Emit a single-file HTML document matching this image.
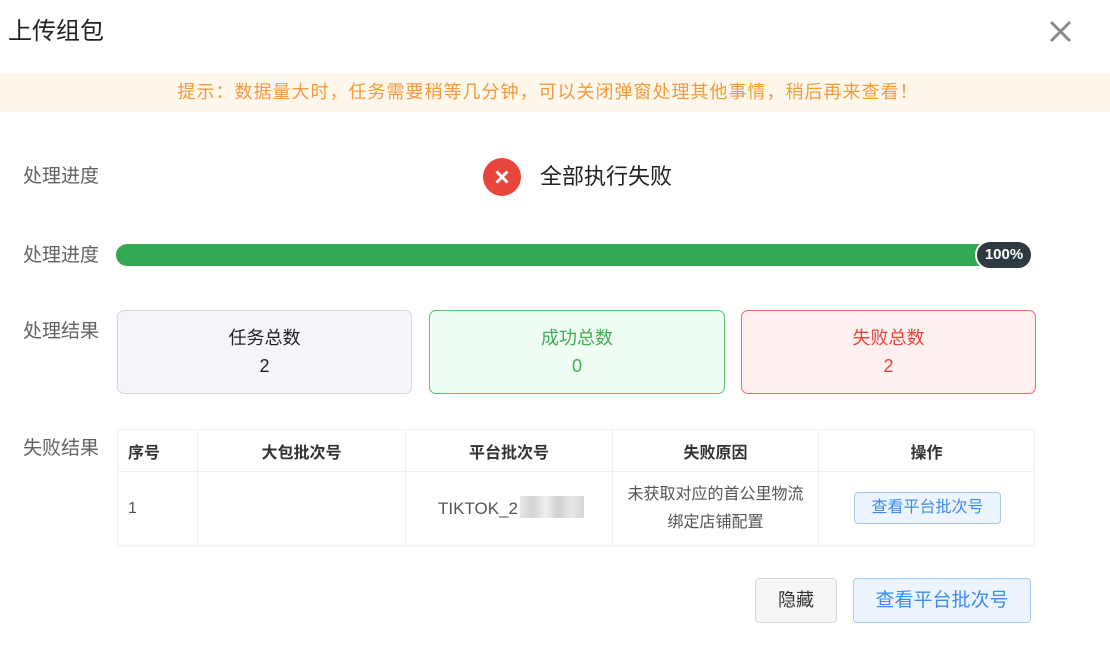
<!DOCTYPE html>
<html><head><meta charset="utf-8"><style>
*{margin:0;padding:0;box-sizing:border-box}
body{width:1110px;height:645px;background:#fff;position:relative;overflow:hidden;font-family:"Liberation Sans","Noto Sans CJK SC",sans-serif;color:#333}
.a{position:absolute}
.lbl{position:absolute;left:23px;font-size:19px;color:#606266;line-height:22px}
.card{position:absolute;top:310px;height:84px;border-radius:7px;border:1px solid;text-align:center;font-size:18px}
.card .t{position:absolute;top:13px;width:100%}
.card .n{position:absolute;top:45px;width:100%}
table{position:absolute;left:117px;top:429px;width:918px;border-collapse:collapse;font-size:16px}
td,th{border:1px solid #ebeef5;text-align:center;color:#555}
th{height:42px;font-weight:bold;color:#333}
td{height:74px}
.btn{position:absolute;border-radius:4px;border:1px solid;text-align:center}
</style></head><body>
<div class="a" style="left:8px;top:17px;font-size:24px;color:#222;line-height:30px">上传组包</div>
<svg class="a" style="left:1048px;top:19px" width="25" height="25" viewBox="0 0 25 25"><path d="M3 3L22 22M22 3L3 22" stroke="#8a8a8a" stroke-width="3"/></svg>
<div class="a" style="left:0;top:73px;width:1110px;height:39px;background:#fff6ec;color:#f39a3b;font-size:18px;letter-spacing:1px;line-height:39px;text-align:center;padding-right:14px">提示：数据量大时，任务需要稍等几分钟，可以关闭弹窗处理其他事情，稍后再来查看！</div>
<div class="lbl" style="top:166px">处理进度</div>
<svg class="a" style="left:483px;top:158px" width="38" height="38"><circle cx="19" cy="19" r="19" fill="#e8453c"/><path d="M13.5 13.5L24.5 24.5M24.5 13.5L13.5 24.5" stroke="#fff" stroke-width="3"/></svg>
<div class="a" style="left:540px;top:163px;font-size:22px;color:#222;line-height:28px">全部执行失败</div>
<div class="lbl" style="top:245px">处理进度</div>
<div class="a" style="left:116px;top:244px;width:900px;height:22px;border-radius:11px;background:#33a852"></div>
<div class="a" style="left:975px;top:240px;width:58px;height:30px;border-radius:15px;background:#2d3a3f;border:2px solid #fff;color:#fff;font-weight:bold;font-size:15px;line-height:26px;text-align:center">100%</div>
<div class="lbl" style="top:321px">处理结果</div>
<div class="card" style="left:117px;width:295px;background:#f5f6fa;border-color:#d5d8dd;color:#222"><div class="t">任务总数</div><div class="n">2</div></div>
<div class="card" style="left:429px;width:296px;background:#effdf2;border-color:#56c36e;color:#3fae57"><div class="t">成功总数</div><div class="n">0</div></div>
<div class="card" style="left:741px;width:295px;background:#fff0f0;border-color:#f06a64;color:#e9443b"><div class="t">失败总数</div><div class="n">2</div></div>
<div class="lbl" style="top:438px">失败结果</div>
<table><tr><th style="width:80px;text-align:left;padding-left:10px">序号</th><th style="width:208px">大包批次号</th><th style="width:207px">平台批次号</th><th style="width:206px">失败原因</th><th>操作</th></tr>
<tr><td style="text-align:left;padding-left:10px">1</td><td></td><td style="font-size:17px;padding-right:62px">TIKTOK_2<span style="position:relative"><span style="position:absolute;left:2px;top:-3px;width:64px;height:22px;background:linear-gradient(90deg,#e8e8e8,#d4d4d4,#eee,#d0d0d0,#e6e6e6,#d6d6d6)"></span></span></td><td style="line-height:28px;font-size:16px">未获取对应的首公里物流<br>绑定店铺配置</td><td></td></tr></table>
<div class="btn" style="left:854px;top:492px;width:147px;height:32px;background:#ecf4ff;border-color:#a5c8f5;color:#3d8bf0;font-size:16px;line-height:30px">查看平台批次号</div>
<div class="btn" style="left:755px;top:578px;width:82px;height:45px;background:#f5f6f8;border-color:#d7d9dc;color:#333;font-size:18px;line-height:43px">隐藏</div>
<div class="btn" style="left:853px;top:578px;width:178px;height:45px;background:#ecf4ff;border-color:#a8c8f5;color:#3d8bf0;font-size:19px;line-height:43px">查看平台批次号</div>
</body></html>
